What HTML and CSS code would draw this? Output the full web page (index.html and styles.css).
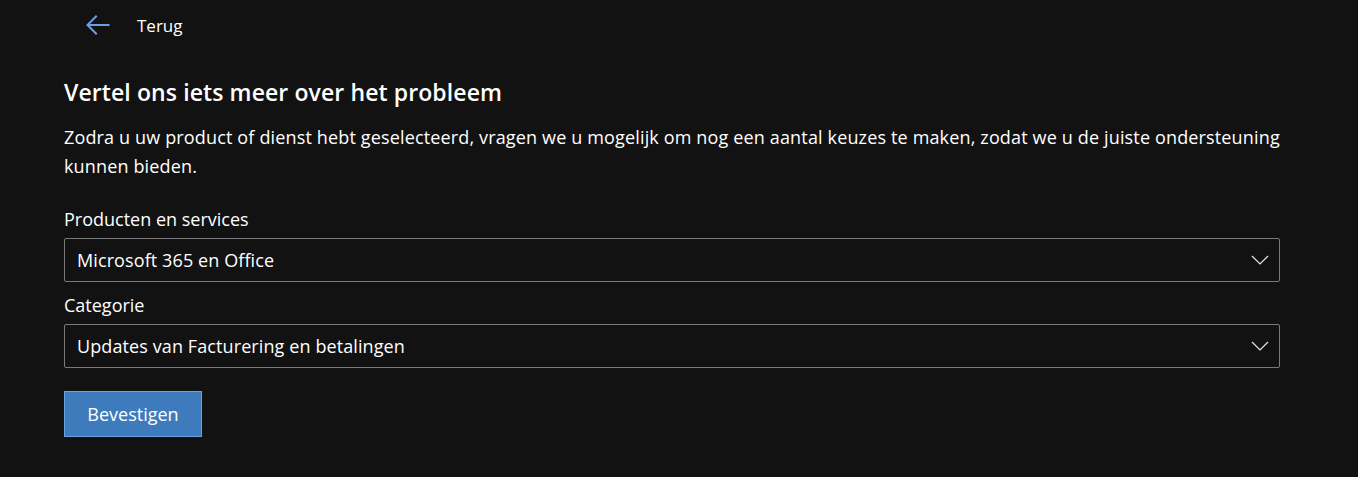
FILE: index.html
```html
<!DOCTYPE html>
<html lang="nl">
<head>
<meta charset="utf-8">
<link rel="stylesheet" href="styles.css">
</head>
<body>
<div class="page">
  <a class="back" href="#">
    <svg class="back-icon" width="24" height="20" viewBox="0 0 24 20"><path d="M22.5 10H2M10 1.5L1.5 10L10 18.5" fill="none" stroke="#6d9fe6" stroke-width="2" stroke-linecap="square"/></svg>
    <span>Terug</span>
  </a>
  <h1 class="title">Vertel ons iets meer over het probleem</h1>
  <p class="intro">Zodra u uw product of dienst hebt geselecteerd, vragen we u mogelijk om nog een aantal keuzes te maken, zodat we u de juiste ondersteuning kunnen bieden.</p>
  <div class="field">
    <label class="label">Producten en services</label>
    <div class="select">
      <span>Microsoft 365 en Office</span>
      <svg class="chev" width="18" height="10" viewBox="0 0 18 10"><path d="M1 1L9 9L17 1" fill="none" stroke="#e6e6e6" stroke-width="1.2"/></svg>
    </div>
  </div>
  <div class="field">
    <label class="label">Categorie</label>
    <div class="select">
      <span>Updates van Facturering en betalingen</span>
      <svg class="chev" width="18" height="10" viewBox="0 0 18 10"><path d="M1 1L9 9L17 1" fill="none" stroke="#e6e6e6" stroke-width="1.2"/></svg>
    </div>
  </div>
  <button class="btn">Bevestigen</button>
</div>
</body>
</html>
```
FILE: styles.css
```css
html, body {
  margin: 0;
  background: #121212;
}
body {
  font-family: "Open Sans", "Noto Sans", sans-serif;
  color: #ffffff;
}
.page {
  padding: 0 78px 0 64px;
  display: flex;
  flex-direction: column;
  align-items: flex-start;
}
.back {
  display: flex;
  align-items: center;
  gap: 27px;
  margin-left: 22px;
  height: 50px;
  color: #ffffff;
  text-decoration: none;
  font-size: 17px;
}
.back-icon { display: block; }
.title {
  margin: 26px 0 0;
  font-size: 23px;
  font-weight: 600;
  line-height: 32px;
  letter-spacing: 0.1px;
}
.intro {
  margin: 15px 0 0;
  font-size: 18px;
  line-height: 29px;
  letter-spacing: 0.15px;
}
.field {
  align-self: stretch;
  display: flex;
  flex-direction: column;
}
.label {
  margin-top: 25px;
  font-size: 18px;
  line-height: 26px;
}
.field + .field .label { margin-top: 10px; }
.select {
  margin-top: 6px;
  height: 42px;
  border: 1px solid #7a7a7a;
  border-radius: 2px;
  display: flex;
  align-items: center;
  justify-content: space-between;
  padding: 0 10px 0 12px;
  font-size: 18px;
  letter-spacing: 0.1px;
}
.chev { display: block; }
.btn {
  margin-top: 23px;
  width: 138px;
  height: 46px;
  background: #3e7bbd;
  border: 1px solid #6aa2e0;
  color: #ffffff;
  font-family: inherit;
  font-size: 18px;
  padding: 0;
}
```
